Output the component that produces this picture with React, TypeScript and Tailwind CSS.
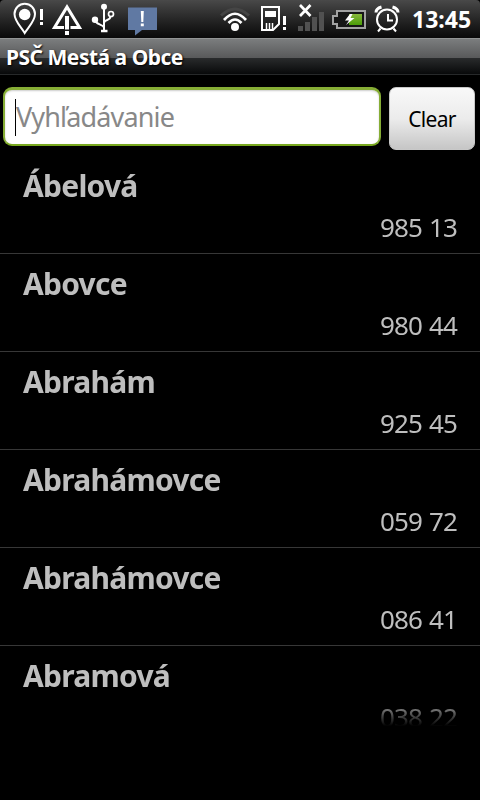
const towns = [
  { name: "Ábelová", zip: "985 13" },
  { name: "Abovce", zip: "980 44" },
  { name: "Abrahám", zip: "925 45" },
  { name: "Abrahámovce", zip: "059 72" },
  { name: "Abrahámovce", zip: "086 41" },
  { name: "Abramová", zip: "038 22" },
]

function NotificationIcons() {
  return (
    <svg width="160" height="38" viewBox="0 0 160 38" fill="none" stroke="white">
      {/* location */}
      <path d="M24.700 33C21 27 14.500 21 14.500 14a10.200 10.200 0 0 1 20.500 0C35 21 28.500 27 24.700 33Z" strokeWidth="2" />
      <circle cx="24.700" cy="14.500" r="5.800" fill="white" stroke="none" />
      <path d="M41.500 9v11M41.500 22v3" strokeWidth="3" />
      {/* warning */}
      <path d="M64 27.500H54.500L67 7l12.500 20.500h-9" strokeWidth="3" />
      <path d="M67 16v13.500M67 31v4" strokeWidth="4" />
      {/* usb */}
      <path d="M104 6v25M104 27.500c-1.500-4-9-2.500-9-8M104 22.500c1.500-3.500 6-1.500 6.500-6" strokeWidth="2" />
      <circle cx="104" cy="6.700" r="3" fill="white" stroke="none" />
      <circle cx="95" cy="19.700" r="3.200" fill="white" stroke="none" />
      <circle cx="111" cy="14" r="2.500" strokeWidth="1.700" />
      <path d="M101 31h6.500" strokeWidth="2.500" />
      {/* message */}
      <path d="M128 7.500h29v22.500h-15l-7 5.500v-5.500h-7z" fill="#6079a3" stroke="none" />
      <path d="M140.800 11h3l-.5 11h-2zM140.800 23.500h3v2.800h-3z" fill="white" stroke="none" />
    </svg>
  )
}

function SystemIcons() {
  return (
    <svg width="190" height="38" viewBox="215 0 190 38" fill="none" stroke="white">
      {/* wifi */}
      <path d="M221 15.500Q235 2.500 249 15.500" stroke="#454545" strokeWidth="3" />
      <path d="M224 20Q235 7.500 246 20" strokeWidth="2.700" />
      <path d="M228.500 23Q235 16 241.500 23" strokeWidth="2.700" />
      <circle cx="235" cy="27" r="4" fill="white" stroke="none" />
      {/* sim card */}
      <path d="M262 7h17v17l-6 6h-11z" strokeWidth="2" />
      <path d="M265 11h11v6h-11z" fill="white" stroke="none" />
      <path d="M266.500 23v7M269.500 23v7M272.500 23v6" strokeWidth="1.500" />
      <path d="M284.500 16v9M284.500 27v3" strokeWidth="3" />
      {/* signal */}
      <path d="M298 26h5v5h-5zM305 22h5v9h-5zM312 17h5v14h-5zM319 12h5v19h-5z" fill="#515151" stroke="none" />
      <path d="M300 5l10.500 11M310.500 5l-10.500 11" strokeWidth="2.700" />
      {/* battery */}
      <defs>
        <linearGradient id="charge" x1="0" y1="0" x2="0" y2="1">
          <stop offset="0" stopColor="#89b83c" />
          <stop offset="1" stopColor="#4a9c08" />
        </linearGradient>
      </defs>
      <path d="M337 11h28v17h-28v-4h-4v-8h4z" fill="#161616" stroke="#a2a2a2" strokeWidth="2" />
      <path d="M349 14h13v11h-13z" fill="url(#charge)" stroke="none" />
      <path d="M350 14l-5 6.500h4l-3 4.500 8.500-7h-4l2-4z" fill="white" stroke="none" />
      {/* alarm */}
      <circle cx="387" cy="19.500" r="10" strokeWidth="2" />
      <path d="M388 14v6.500h5" strokeWidth="2" />
      <path d="M376 12.500q0-4 5.500-5.500M398 12.500q0-4-5.500-5.500" strokeWidth="3" />
      <path d="M380.500 28.500l-2.500 3M393.500 28.500l2.500 3" strokeWidth="2" />
    </svg>
  )
}

export default function App() {
  return (
    <div className="flex h-[800px] w-[480px] flex-col overflow-hidden bg-black font-['Noto_Sans','Open_Sans',sans-serif]">
      <div className="flex h-[38px] shrink-0 items-center rounded-t-[4px] bg-linear-to-b from-[#494949] to-[#090909]">
        <NotificationIcons />
        <div className="w-[55px]" />
        <SystemIcons />
        <span className="ml-[7px] text-[23px] leading-[38px] font-bold whitespace-nowrap text-white">13:45</span>
      </div>

      <div className="flex h-[37px] shrink-0 items-center border-t border-b border-t-[#929494] border-b-[#27292a] bg-[linear-gradient(#7b7d7e_0,#58595a_19px,#292b2c_19px,#08090a_100%)] pt-px pl-1.5">
        <h1 className="text-[21px] leading-none font-bold tracking-[-0.5px] text-white [text-shadow:1px_1px_2px_#000]">
          PSČ Mestá a Obce
        </h1>
      </div>

      <div className="flex h-[81px] shrink-0 items-start gap-2 pt-3 pl-[3px]">
        <div className="flex h-[59px] w-[378px] items-center rounded-[9px] border-2 border-t-[3px] border-[#86ad35] border-b-[#78a81e] bg-white pl-2.5 shadow-[inset_0_1px_2px_#ccc]">
          <div className="h-[37px] w-px bg-black" />
          <span className="text-[27px] leading-9 tracking-[-0.85px] text-[#888]">Vyhľadávanie</span>
        </div>
        <button className="h-[63px] w-[86px] rounded-[7px] border border-[#c8c8c8] bg-linear-to-b from-[#f8f8f8] via-[#ececec] to-[#c6c6c6] pt-0.5 text-[21px] tracking-[-0.7px] text-black">
          Clear
        </button>
      </div>

      {/* the list fades out towards the bottom of its viewport */}
      <ul className="shrink-0 text-[#bebebe] [mask-image:linear-gradient(#000_543px,transparent_570px)]">
        {towns.map((town, i) => (
          <li key={i} className="flex h-[98px] flex-col border-b border-[#373737] px-[23px] pt-2.5">
            <span className="text-[30px] leading-10 font-bold tracking-[-0.75px]">{town.name}</span>
            <span className="self-end text-[26px] leading-[42px] tracking-[-0.9px] [word-spacing:1.2px]">{town.zip}</span>
          </li>
        ))}
      </ul>
    </div>
  )
}
